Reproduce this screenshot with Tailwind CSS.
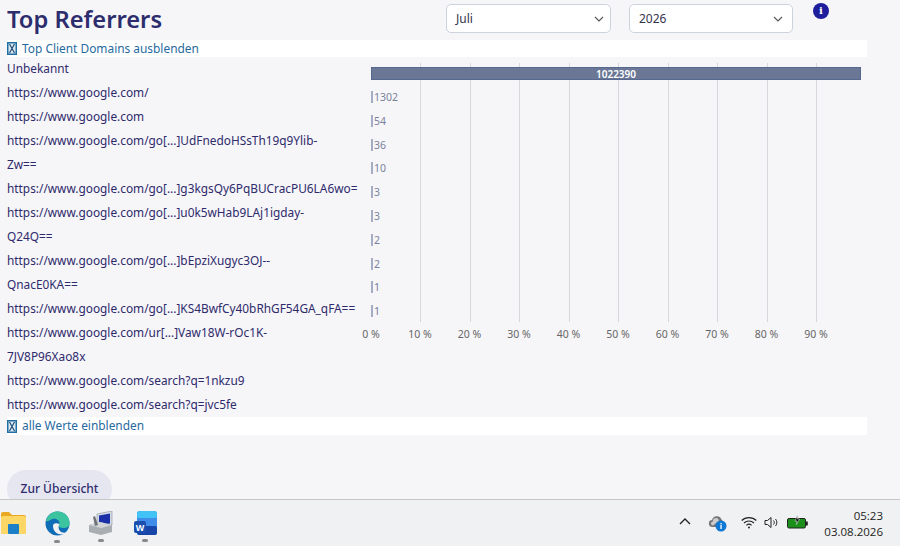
<!DOCTYPE html>
<html lang="en">
<head>
    <meta charset="UTF-8">
    <title>Top Referrers</title>
    <script src="https://cdn.jsdelivr.net/npm/@tailwindcss/browser@4"></script>
</head>
<body class="w-[900px] h-[546px] overflow-hidden bg-[#f6f6f9] font-['Noto_Sans',sans-serif] text-[#2e2a6b]">
    <div class="h-[499px] overflow-hidden pl-[7px] pr-[33px]">
        <!-- header -->
        <div class="flex h-[40px]">
            <h1 class="w-[439px] pt-[3px] text-[23.7px] leading-[33px] font-semibold text-[#2d2d6e]">Top Referrers</h1>
            <div class="mt-[4px] flex h-[29px] w-[165px] items-center justify-between rounded-[5px] border border-[#cdd3de] bg-white pl-[9px] pr-[5px] text-[12px] text-[#33334d]">
                <span>Juli</span>
                <svg width="12" height="12" viewBox="0 0 12 12" fill="none" stroke="#555" stroke-width="1.1"><path d="M2 4l4 4 4-4"/></svg>
            </div>
            <div class="mt-[4px] ml-[18px] flex h-[29px] w-[164px] items-center justify-between rounded-[5px] border border-[#cdd3de] bg-white pl-[9px] pr-[8px] text-[12px] text-[#33334d]">
                <span>2026</span>
                <svg width="12" height="12" viewBox="0 0 12 12" fill="none" stroke="#555" stroke-width="1.1"><path d="M2 4l4 4 4-4"/></svg>
            </div>
            <div class="mt-[3px] ml-[20px] flex h-[16px] w-[16px] items-center justify-center rounded-full bg-[#1e1e9c] font-['DejaVu_Serif',serif] text-[10px] font-bold leading-none text-white">i</div>
        </div>

        <!-- toggle top -->
        <div class="flex h-[17px] items-center gap-[5px] bg-white text-[11.9px] text-[#1f6a9e]">
            <svg width="10" height="13" viewBox="0 0 10 13"><rect width="10" height="13" fill="#1f6fa5"/><rect x="1.500" y="1.500" width="7" height="10" fill="#dfe9f0"/><path d="M2.500 2l5 9M7.500 2l-5 9" stroke="#1f4f78" stroke-width="1.200"/></svg>
            <span>Top Client Domains ausblenden</span>
        </div>

        <div class="flex">
            <!-- referrer list -->
            <div class="-mt-px mb-px w-[352px] text-[11.85px] leading-[24px]">
                <div>Unbekannt</div>
                <div>https://www.google.com/</div>
                <div>https://www.google.com</div>
                <div>https://www.google.com/go[...]UdFnedoHSsTh19q9Ylib-<br>Zw==</div>
                <div>https://www.google.com/go[...]g3kgsQy6PqBUCracPU6LA6wo=</div>
                <div>https://www.google.com/go[...]u0k5wHab9LAj1igday-<br>Q24Q==</div>
                <div>https://www.google.com/go[...]bEpziXugyc3OJ--<br>QnacE0KA==</div>
                <div>https://www.google.com/go[...]KS4BwfCy40bRhGF54GA_qFA==</div>
                <div>https://www.google.com/ur[...]Vaw18W-rOc1K-<br>7JV8P96Xao8x</div>
                <div>https://www.google.com/search?q=1nkzu9</div>
                <div>https://www.google.com/search?q=jvc5fe</div>
            </div>

            <!-- chart -->
            <div class="relative ml-[12px] h-[288px] w-[495px] text-[10.5px] leading-[14px] text-[#7a829c]">
                <div class="absolute left-[49px] top-[6px] h-[259px] w-px bg-[#d8d8dc]"></div>
                <div class="absolute left-[99px] top-[6px] h-[259px] w-px bg-[#d8d8dc]"></div>
                <div class="absolute left-[148px] top-[6px] h-[259px] w-px bg-[#d8d8dc]"></div>
                <div class="absolute left-[198px] top-[6px] h-[259px] w-px bg-[#d8d8dc]"></div>
                <div class="absolute left-[247px] top-[6px] h-[259px] w-px bg-[#d8d8dc]"></div>
                <div class="absolute left-[297px] top-[6px] h-[259px] w-px bg-[#d8d8dc]"></div>
                <div class="absolute left-[346px] top-[6px] h-[259px] w-px bg-[#d8d8dc]"></div>
                <div class="absolute left-[396px] top-[6px] h-[259px] w-px bg-[#d8d8dc]"></div>
                <div class="absolute left-[445px] top-[6px] h-[259px] w-px bg-[#d8d8dc]"></div>

                <div class="relative flex flex-col pt-[10px]">
                    <div class="mb-[11px] flex h-[13px] w-[490px] items-center justify-center border border-[#566890] bg-[#6a7896] text-[10px] font-semibold text-white">1022390</div>
                    <div class="mb-[11.8px] flex h-[12px] items-center gap-[1px]"><span class="h-[12px] w-[2px] bg-[#a5adc4]"></span>1302</div>
                    <div class="mb-[11.8px] flex h-[12px] items-center gap-[1px]"><span class="h-[12px] w-[2px] bg-[#a5adc4]"></span>54</div>
                    <div class="mb-[11.8px] flex h-[12px] items-center gap-[1px]"><span class="h-[12px] w-[2px] bg-[#a5adc4]"></span>36</div>
                    <div class="mb-[11.8px] flex h-[12px] items-center gap-[1px]"><span class="h-[12px] w-[2px] bg-[#a5adc4]"></span>10</div>
                    <div class="mb-[11.8px] flex h-[12px] items-center gap-[1px]"><span class="h-[12px] w-[2px] bg-[#a5adc4]"></span>3</div>
                    <div class="mb-[11.8px] flex h-[12px] items-center gap-[1px]"><span class="h-[12px] w-[2px] bg-[#a5adc4]"></span>3</div>
                    <div class="mb-[11.8px] flex h-[12px] items-center gap-[1px]"><span class="h-[12px] w-[2px] bg-[#a5adc4]"></span>2</div>
                    <div class="mb-[11.8px] flex h-[12px] items-center gap-[1px]"><span class="h-[12px] w-[2px] bg-[#a5adc4]"></span>2</div>
                    <div class="mb-[11.8px] flex h-[12px] items-center gap-[1px]"><span class="h-[12px] w-[2px] bg-[#a5adc4]"></span>1</div>
                    <div class="flex h-[12px] items-center gap-[1px]"><span class="h-[12px] w-[2px] bg-[#a5adc4]"></span>1</div>
                </div>
                <div class="absolute left-[-10px] top-[270px] flex text-center text-[#666]">
                    <span class="w-[20px]">0 %</span>
                    <span class="ml-[19px] w-[40px]">10 %</span>
                    <span class="ml-[9.5px] w-[40px]">20 %</span>
                    <span class="ml-[9.5px] w-[40px]">30 %</span>
                    <span class="ml-[9.5px] w-[40px]">40 %</span>
                    <span class="ml-[9.5px] w-[40px]">50 %</span>
                    <span class="ml-[9.5px] w-[40px]">60 %</span>
                    <span class="ml-[9.5px] w-[40px]">70 %</span>
                    <span class="ml-[9.5px] w-[40px]">80 %</span>
                    <span class="ml-[9.5px] w-[40px]">90 %</span>
                </div>
            </div>
        </div>

        <!-- toggle bottom -->
        <div class="flex h-[18px] items-center gap-[5px] bg-white text-[11.9px] text-[#1f6a9e]">
            <svg width="10" height="13" viewBox="0 0 10 13"><rect width="10" height="13" fill="#1f6fa5"/><rect x="1.500" y="1.500" width="7" height="10" fill="#dfe9f0"/><path d="M2.500 2l5 9M7.500 2l-5 9" stroke="#1f4f78" stroke-width="1.200"/></svg>
            <span>alle Werte einblenden</span>
        </div>

        <div class="mt-[35px] flex h-[38px] w-[105px] items-center justify-center rounded-[19px] bg-[#e6e6f0] text-[12px] font-medium text-[#2d2d6e]">Zur Übersicht</div>
    </div>

    <!-- taskbar -->
    <div class="flex h-[47px] items-start border-t border-[#c6c6c6] bg-[#f0f1f2] font-['Open_Sans',sans-serif]">
        <div class="flex">
            <div class="flex w-[27px] flex-col items-center pt-[12px]">
                <svg width="25" height="22" viewBox="0 0 25 22"><path d="M0 2a2 2 0 0 1 2-2h6l3 3h12a2 2 0 0 1 2 2v15a2 2 0 0 1-2 2H2a2 2 0 0 1-2-2z" fill="#e8a820"/><rect y="4" width="25" height="18" rx="2" fill="#fdd766"/><rect x="7" y="12" width="11" height="10" rx="1" fill="#1b80c8"/></svg>
            </div>
            <div class="ml-[17px] flex w-[26px] flex-col items-center pt-[11px]">
                <svg width="25" height="25" viewBox="0 0 25 25"><circle cx="12.500" cy="12.500" r="12" fill="#0f6db8"/><path d="M1 10C3 3 8 .5 12.500.5 20 .5 25 6 24.500 13c-.2 3-3 4-6 4-3.500 0-5-1-5-3 0 0 1-.5 1-2 0-3-4-5-7-4-3 1-5 3-6.500 2z" fill="#3cc3a0"/><path d="M8 15c0 5 4 8.500 9 8.500 2 0 4-.8 5-2-4 1-7-.5-8-3-.6-1.500-.6-4 .5-5.500C11 11.500 8 12 8 15z" fill="#f0f1f2"/></svg>
                <span class="mt-[4px] h-[3px] w-[6px] rounded-full bg-[#8a8a8a]"></span>
            </div>
            <div class="ml-[18px] flex w-[26px] flex-col items-center pt-[11px]">
                <svg width="24" height="24" viewBox="0 0 24 24"><path d="M8 3l15-3v14L8 16z" fill="#d5dbe6" stroke="#8a93a3" stroke-width=".6"/><path d="M10 4.500l11-2v10l-11 1.500z" fill="#1a2fa8"/><path d="M0 14l11-3 12 3v7l-11 3-12-3z" fill="#a9aeb3"/><path d="M0 14l12 3 11-3-12-3z" fill="#d3d6d9"/><path d="M4 6l2-1 3 9-3 1z" fill="#6d7378"/></svg>
                <span class="mt-[4px] h-[3px] w-[6px] rounded-full bg-[#8a8a8a]"></span>
            </div>
            <div class="ml-[18px] flex w-[26px] flex-col items-center pt-[11px]">
                <svg width="23" height="24" viewBox="0 0 23 24"><rect x="3" y="0" width="20" height="24" rx="3" fill="#2b7cd3"/><rect x="3" y="0" width="20" height="8" rx="3" fill="#41c4f5"/><rect x="3" y="7" width="20" height="8" fill="#3f8de8"/><rect x="3" y="15" width="20" height="9" rx="2" fill="#1746a8"/><rect x="0" y="10" width="12" height="12" rx="2" fill="#1a4fb0"/><text x="6" y="19.500" text-anchor="middle" font-size="9" font-weight="700" fill="#fff" font-family="Liberation Sans, sans-serif">W</text></svg>
                <span class="mt-[4px] h-[3px] w-[6px] rounded-full bg-[#8a8a8a]"></span>
            </div>
        </div>

        <div class="ml-auto flex items-start pr-[17px]">
            <svg class="mt-[17px]" width="12" height="8" viewBox="0 0 12 8" fill="none" stroke="#222" stroke-width="1.300"><path d="M1 7l5-5 5 5"/></svg>
            <svg class="ml-[18px] mt-[15px]" width="18" height="17" viewBox="0 0 18 17"><path d="M3.500 12a3.500 3.500 0 0 1-.5-7 5 5 0 0 1 9.500-.5A4 4 0 0 1 14 8v4z" fill="#777"/><path d="M4 10.500a2 2 0 0 1 0-4 3 3 0 0 1 6-1" fill="#ccc"/><circle cx="12" cy="11" r="5.500" fill="#0f78d4"/><rect x="11.400" y="10" width="1.300" height="4" fill="#fff"/><rect x="11.400" y="8" width="1.300" height="1.300" fill="#fff"/></svg>
            <svg class="ml-[14px] mt-[16px]" width="16" height="13" viewBox="0 0 16 13" fill="none" stroke="#222" stroke-width="1.100"><path d="M.7 4.500C4.500.7 11.500.7 15.300 4.500M3 7c2.800-2.600 7.200-2.600 10 0M5.400 9.300c1.500-1.300 3.700-1.300 5.200 0"/><circle cx="8" cy="11.600" r="1" fill="#222" stroke="none"/></svg>
            <svg class="ml-[7px] mt-[16px]" width="15" height="13" viewBox="0 0 15 13" fill="none" stroke="#222" stroke-width="1"><path d="M1 4.500h2.500L7 1.500v10L3.500 8.500H1z"/><path d="M9.500 4.500c1 1.200 1 2.800 0 4M11.500 3c1.800 2 1.800 5 0 7"/></svg>
            <svg class="ml-[8px] mt-[15px]" width="21" height="14" viewBox="0 0 21 14"><rect x=".5" y="3.500" width="18" height="9.500" rx="1.500" fill="#1a8f1a" stroke="#222"/><rect x="19" y="6.500" width="1.800" height="4" fill="#222"/><path d="M10.500 0L8 6h2l-.5 3.500L12.500 4h-2z" fill="#111" stroke="#f0f1f2" stroke-width=".5"/></svg>
            <div class="ml-[16px] mt-[8px] text-right text-[11.500px] leading-[16px] text-[#222]">
                <div>05:23</div>
                <div>03.08.2026</div>
            </div>
        </div>
    </div>
</body>
</html>
